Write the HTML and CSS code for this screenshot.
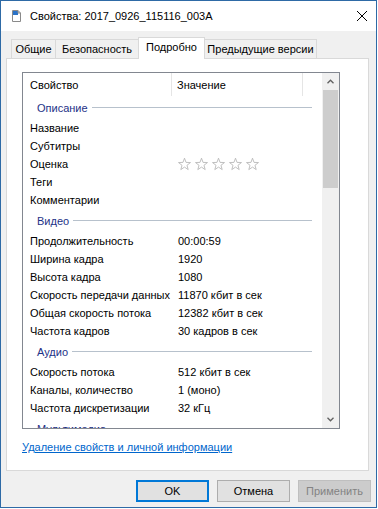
FILE: index.html
```html
<!DOCTYPE html>
<html lang="ru">
<head>
<meta charset="utf-8">
<title>Свойства</title>
<link rel="stylesheet" href="styles.css">
</head>
<body>
<div class="window">
  <div class="titlebar">
    <svg class="app-icon" width="9" height="12" viewBox="0 0 9 12">
      <path d="M0.5 0.5H6L8.5 3V11.5H0.5Z" fill="#fff" stroke="#8a8a8a"/>
      <rect x="1" y="1" width="5" height="4" fill="#2a73c8"/>
      <path d="M6 0.5V3H8.5" fill="none" stroke="#8a8a8a"/>
    </svg>
    <span class="title">Свойства: 2017_0926_115116_003A</span>
    <svg class="close" width="10" height="10" viewBox="0 0 10 10">
      <path d="M0 0L10 10M10 0L0 10" stroke="#000" stroke-width="1"/>
    </svg>
  </div>
  <div class="client">
    <div class="tabs">
      <div class="tab t1">Общие</div>
      <div class="tab t2">Безопасность</div>
      <div class="tab t3 selected">Подробно</div>
      <div class="tab t4">Предыдущие версии</div>
    </div>
    <div class="panel">
      <div class="listbox">
        <div class="list">
          <div class="header">
            <div class="hcell c1">Свойство</div>
            <div class="hcell c2">Значение</div>
            <div class="hcell c3"></div>
          </div>
          <div class="group"><span>Описание</span><i class="gline"></i></div>
          <div class="row"><span class="k">Название</span><span class="v"></span></div>
          <div class="row"><span class="k">Субтитры</span><span class="v"></span></div>
          <div class="row"><span class="k">Оценка</span><span class="v stars">
            <svg width="13" height="13" viewBox="0 0 13 13"><polygon points="6.5,0.2 8.03,4.4 12.49,4.55 8.97,7.3 10.2,11.6 6.5,9.1 2.8,11.6 4.03,7.3 0.51,4.55 4.97,4.4" fill="#fff" stroke="#b9b9b9" stroke-width="0.9"/></svg>
            <svg width="13" height="13" viewBox="0 0 13 13"><polygon points="6.5,0.2 8.03,4.4 12.49,4.55 8.97,7.3 10.2,11.6 6.5,9.1 2.8,11.6 4.03,7.3 0.51,4.55 4.97,4.4" fill="#fff" stroke="#b9b9b9" stroke-width="0.9"/></svg>
            <svg width="13" height="13" viewBox="0 0 13 13"><polygon points="6.5,0.2 8.03,4.4 12.49,4.55 8.97,7.3 10.2,11.6 6.5,9.1 2.8,11.6 4.03,7.3 0.51,4.55 4.97,4.4" fill="#fff" stroke="#b9b9b9" stroke-width="0.9"/></svg>
            <svg width="13" height="13" viewBox="0 0 13 13"><polygon points="6.5,0.2 8.03,4.4 12.49,4.55 8.97,7.3 10.2,11.6 6.5,9.1 2.8,11.6 4.03,7.3 0.51,4.55 4.97,4.4" fill="#fff" stroke="#b9b9b9" stroke-width="0.9"/></svg>
            <svg width="13" height="13" viewBox="0 0 13 13"><polygon points="6.5,0.2 8.03,4.4 12.49,4.55 8.97,7.3 10.2,11.6 6.5,9.1 2.8,11.6 4.03,7.3 0.51,4.55 4.97,4.4" fill="#fff" stroke="#b9b9b9" stroke-width="0.9"/></svg>
          </span></div>
          <div class="row"><span class="k">Теги</span><span class="v"></span></div>
          <div class="row"><span class="k">Комментарии</span><span class="v"></span></div>
          <div class="group"><span>Видео</span><i class="gline"></i></div>
          <div class="row"><span class="k">Продолжительность</span><span class="v">00:00:59</span></div>
          <div class="row"><span class="k">Ширина кадра</span><span class="v">1920</span></div>
          <div class="row"><span class="k">Высота кадра</span><span class="v">1080</span></div>
          <div class="row"><span class="k">Скорость передачи данных</span><span class="v">11870 кбит в сек</span></div>
          <div class="row"><span class="k">Общая скорость потока</span><span class="v">12382 кбит в сек</span></div>
          <div class="row"><span class="k">Частота кадров</span><span class="v">30 кадров в сек</span></div>
          <div class="group"><span>Аудио</span><i class="gline"></i></div>
          <div class="row"><span class="k">Скорость потока</span><span class="v">512 кбит в сек</span></div>
          <div class="row"><span class="k">Каналы, количество</span><span class="v">1 (моно)</span></div>
          <div class="row"><span class="k">Частота дискретизации</span><span class="v">32 кГц</span></div>
          <div class="group"><span>Мультимедиа</span><i class="gline"></i></div>
        </div>
        <div class="scrollbar">
          <div class="sbtn">
            <svg width="7" height="5" viewBox="0 0 7 5"><polyline points="0.5,4.2 3.5,1.2 6.5,4.2" fill="none" stroke="#606060" stroke-width="1.3"/></svg>
          </div>
          <div class="track"><div class="thumb"></div></div>
          <div class="sbtn">
            <svg width="7" height="5" viewBox="0 0 7 5"><polyline points="0.5,0.8 3.5,3.8 6.5,0.8" fill="none" stroke="#606060" stroke-width="1.3"/></svg>
          </div>
        </div>
      </div>
      <a class="link" href="#">Удаление свойств и личной информации</a>
    </div>
    <div class="buttons">
      <div class="btn default">OK</div>
      <div class="btn">Отмена</div>
      <div class="btn disabled">Применить</div>
    </div>
  </div>
</div>
</body>
</html>
```

FILE: styles.css
```css
* { box-sizing: border-box; }

body {
  margin: 0;
  background: #ffffff;
  font-family: "Liberation Sans", Arial, sans-serif;
  font-size: 11px;
  color: #000;
}

.window {
  width: 377px;
  height: 508px;
  border: 1px solid #2e6aa6;
  background: #f0f0f0;
  display: flex;
  flex-direction: column;
}

.titlebar {
  height: 30px;
  flex: 0 0 30px;
  background: #ffffff;
  display: flex;
  align-items: center;
  padding: 0 9px 0 11px;
}

.title {
  flex: 1;
  margin-left: 9px;
  white-space: nowrap;
}

.client {
  flex: 1;
  padding: 0 5px;
  display: flex;
  flex-direction: column;
}

.tabs {
  height: 27px;
  flex: 0 0 27px;
  display: flex;
  align-items: flex-end;
  padding-left: 5px;
}

.tab {
  height: 19px;
  border: 1px solid #d9d9d9;
  border-bottom: none;
  background: #f0f0f0;
  display: flex;
  align-items: center;
  justify-content: center;
  white-space: nowrap;
  margin-left: -1px;
}

.t1 { width: 45px; margin-left: 0; }
.t2 { width: 84px; }
.t3 { width: 67px; }
.t4 { width: 113px; }

.tab.selected {
  height: 22px;
  margin-bottom: -1px;
  background: #ffffff;
  position: relative;
  z-index: 1;
  padding-bottom: 3px;
}

.panel {
  width: 363px;
  height: 413px;
  background: #ffffff;
  border: 1px solid #d9d9d9;
  padding: 13px 0 0 15px;
}

.listbox {
  width: 318px;
  height: 357px;
  border: 1px solid #828790;
  display: flex;
  overflow: hidden;
}

.list {
  flex: 1;
  overflow: hidden;
  min-width: 0;
}

.header {
  height: 23px;
  display: flex;
}

.hcell {
  height: 23px;
  display: flex;
  align-items: center;
  border-right: 1px solid #e5e5e5;
}

.c1 { width: 149px; padding-left: 7px; }
.c2 { width: 131px; padding-left: 5px; }
.c3 { flex: 1; border-right: none; }

.group {
  height: 23px;
  display: flex;
  align-items: center;
  padding: 0 10px 0 14px;
  color: #1e3287;
  white-space: nowrap;
}

.gline {
  flex: 1;
  height: 1px;
  margin-left: 4px;
  background: #b7c1cc;
}

.row {
  height: 18px;
  display: flex;
  align-items: center;
  white-space: nowrap;
}

.k {
  width: 148px;
  flex: 0 0 148px;
  padding-left: 7px;
}

.v {
  padding-left: 7px;
}

.stars {
  display: flex;
  gap: 4px;
}

.scrollbar {
  width: 17px;
  flex: 0 0 17px;
  background: #f0f0f0;
  display: flex;
  flex-direction: column;
}

.sbtn {
  height: 17px;
  flex: 0 0 17px;
  display: flex;
  align-items: center;
  justify-content: center;
}

.track {
  flex: 1;
}

.thumb {
  height: 98px;
  margin: 0 1px;
  background: #cdcdcd;
}

.link {
  display: block;
  margin-top: 10px;
  height: 16px;
  line-height: 16px;
  color: #0066cc;
  text-decoration: underline;
  white-space: nowrap;
}

.buttons {
  display: flex;
  justify-content: flex-end;
  gap: 8px;
  margin-top: 9px;
}

.btn {
  width: 73px;
  height: 22px;
  background: #e1e1e1;
  border: 1px solid #adadad;
  display: flex;
  align-items: center;
  justify-content: center;
}

.btn.default {
  border: 2px solid #0078d7;
}

.btn.disabled {
  background: #cccccc;
  border-color: #bfbfbf;
  color: #838383;
}
```
